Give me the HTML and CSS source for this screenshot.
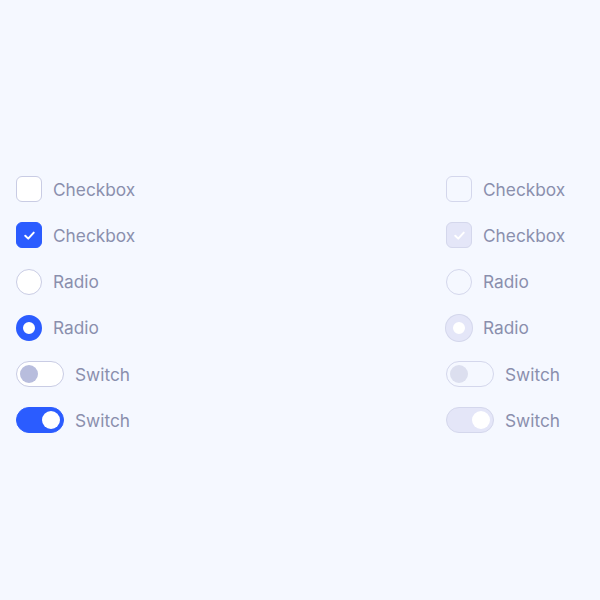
FILE: index.html
```html
<!DOCTYPE html>
<html>
  <head>
    <title>Controls</title>
    <link rel="stylesheet" href="styles.css">
  </head>
  <body>
    <div class="board">
      <div class="column">
        <label class="control">
          <span class="box"></span>
          <span class="label">Checkbox</span>
        </label>
        <label class="control">
          <span class="box checked">
            <svg viewBox="0 0 12 12" width="15" height="15"><path d="M2.6 6.2 L5 8.5 L9.4 3.7" fill="none" stroke="#fff" stroke-width="1.6" stroke-linecap="round" stroke-linejoin="round"/></svg>
          </span>
          <span class="label">Checkbox</span>
        </label>
        <label class="control">
          <span class="radio"></span>
          <span class="label">Radio</span>
        </label>
        <label class="control">
          <span class="radio checked"></span>
          <span class="label">Radio</span>
        </label>
        <label class="control">
          <span class="switch"><span class="knob"></span></span>
          <span class="label">Switch</span>
        </label>
        <label class="control">
          <span class="switch on"><span class="knob"></span></span>
          <span class="label">Switch</span>
        </label>
      </div>

      <div class="column disabled">
        <label class="control">
          <span class="box"></span>
          <span class="label">Checkbox</span>
        </label>
        <label class="control">
          <span class="box checked">
            <svg viewBox="0 0 12 12" width="15" height="15"><path d="M2.6 6.2 L5 8.5 L9.4 3.7" fill="none" stroke="#fff" stroke-width="1.6" stroke-linecap="round" stroke-linejoin="round"/></svg>
          </span>
          <span class="label">Checkbox</span>
        </label>
        <label class="control">
          <span class="radio"></span>
          <span class="label">Radio</span>
        </label>
        <label class="control">
          <span class="radio checked"></span>
          <span class="label">Radio</span>
        </label>
        <label class="control">
          <span class="switch"><span class="knob"></span></span>
          <span class="label">Switch</span>
        </label>
        <label class="control">
          <span class="switch on"><span class="knob"></span></span>
          <span class="label">Switch</span>
        </label>
      </div>
    </div>
  </body>
</html>
```

FILE: styles.css
```css
body {
  margin: 0;
  background-color: #f5f8ff;
  font-family: Inter, "Noto Sans", sans-serif;
}

.board {
  display: flex;
  justify-content: space-between;
  padding: 176px 0 0 16px;
  width: 600px;
  box-sizing: border-box;
}

.column {
  display: flex;
  flex-direction: column;
  gap: 20.25px;
  width: 154px;
}

.control {
  display: flex;
  align-items: center;
  gap: 11px;
  height: 26px;
}

.label {
  font-size: 17.3px;
  color: #8a8fad;
}

.box,
.radio {
  width: 26px;
  height: 26px;
  box-sizing: border-box;
  border: 1px solid #c9cce4;
  background-color: #fff;
  display: flex;
  align-items: center;
  justify-content: center;
  flex-shrink: 0;
}

.box {
  border-radius: 6px;
}

.radio {
  border-radius: 50%;
}

.box.checked {
  background-color: #2b5cff;
  border-color: #2b5cff;
}

.radio.checked {
  border: 7px solid #2b5cff;
}

.switch {
  width: 48px;
  height: 26px;
  box-sizing: border-box;
  border: 1px solid #c9cce4;
  border-radius: 13px;
  background-color: #fff;
  display: flex;
  align-items: center;
  padding: 0 3px;
  flex-shrink: 0;
}

.knob {
  width: 18px;
  height: 18px;
  border-radius: 50%;
  background-color: #b8bddd;
}

.switch.on {
  background-color: #2b5cff;
  border-color: #2b5cff;
  justify-content: flex-end;
}

.switch.on .knob {
  background-color: #fff;
}

.disabled .box,
.disabled .radio,
.disabled .switch {
  background-color: #f5f8ff;
  border-color: #d4d7ec;
}

.disabled .box.checked,
.disabled .switch.on {
  background-color: #e4e6f8;
  border-color: #d4d7ec;
}

.disabled .radio.checked {
  background-color: #fff;
  border: 7px solid #e4e6f8;
  box-shadow: 0 0 0 1px #d4d7ec;
}

.disabled .knob {
  background-color: #dcdfef;
}

.disabled .switch.on .knob {
  background-color: #fff;
}
```
